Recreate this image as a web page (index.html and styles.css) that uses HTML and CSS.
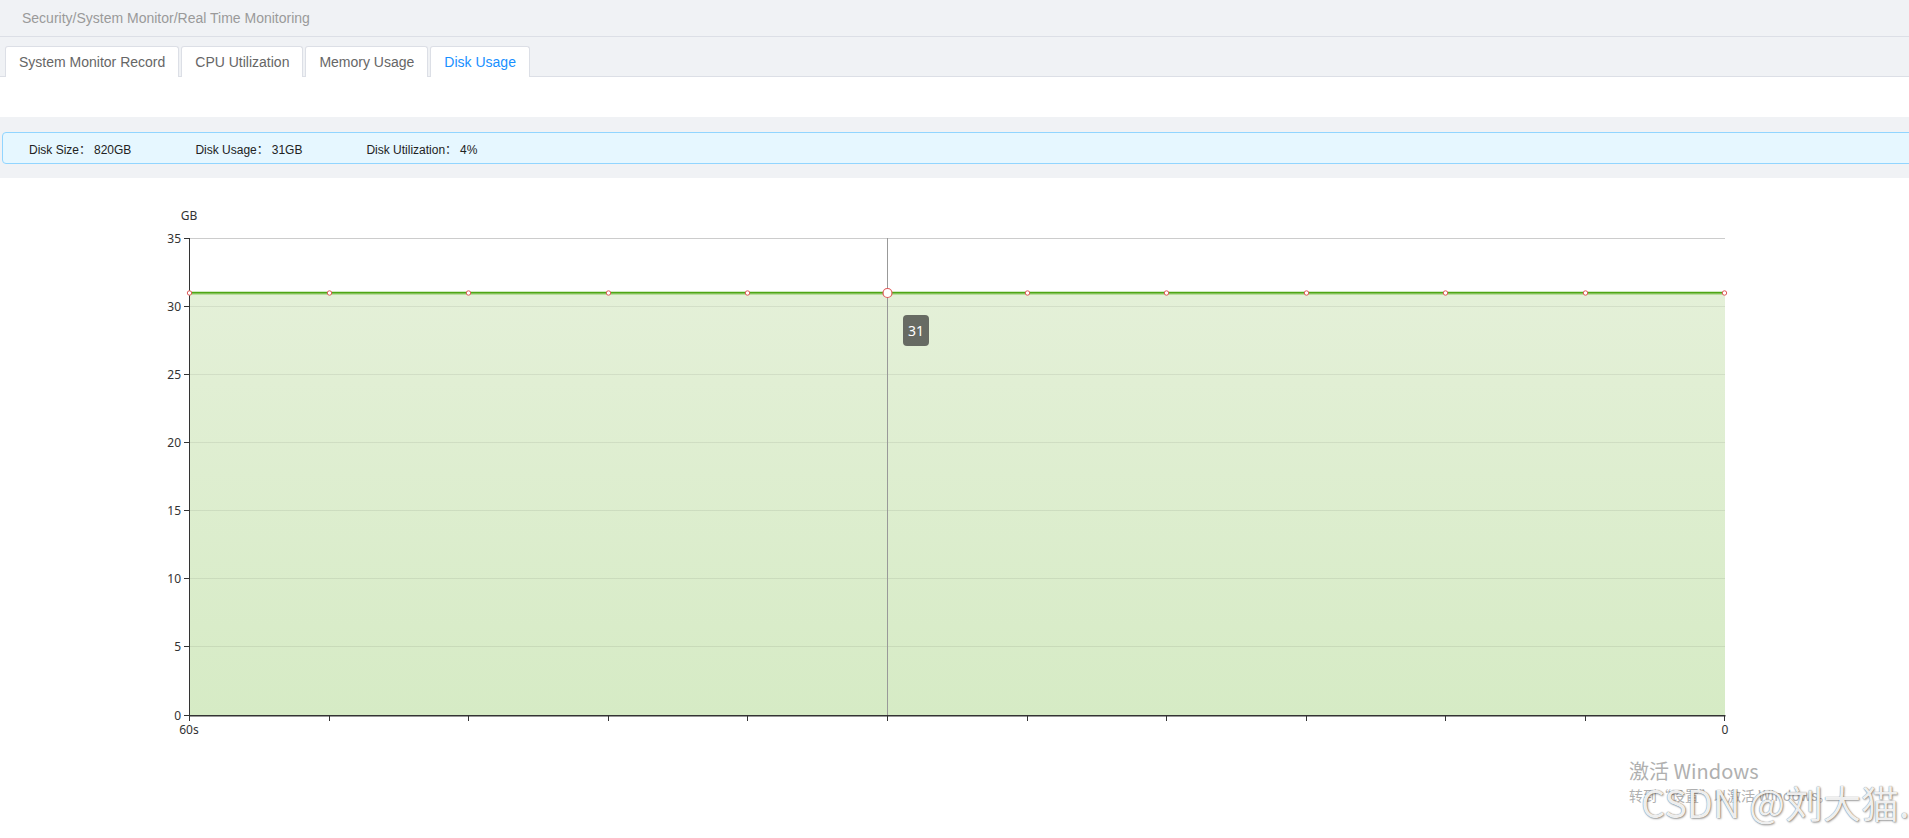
FILE: index.html
```html
<!DOCTYPE html>
<html>
<head>
<meta charset="utf-8">
<link rel="stylesheet" href="styles.css">
</head>
<body>
<div class="page">
  <div class="breadcrumb"><span>Security/System Monitor/Real Time Monitoring</span></div>
  <div class="tabs">
    <div class="tab">System Monitor Record</div>
    <div class="tab">CPU Utilization</div>
    <div class="tab">Memory Usage</div>
    <div class="tab active">Disk Usage</div>
  </div>
  <div class="spacer"></div>
  <div class="summary">
    <div class="info">
      <span class="item"><span class="label">Disk Size<span class="colon">：</span></span>820GB</span>
      <span class="item"><span class="label">Disk Usage<span class="colon">：</span></span>31GB</span>
      <span class="item"><span class="label">Disk Utilization<span class="colon">：</span></span>4%</span>
    </div>
  </div>
  <div class="chart">
    <svg class="plot" width="1909" height="660" viewBox="0 178 1909 660" xmlns="http://www.w3.org/2000/svg">
      <defs>
        <linearGradient id="area" x1="0" y1="0" x2="0" y2="1">
          <stop offset="0" stop-color="#e4f0d8"/>
          <stop offset="1" stop-color="#d6ebc5"/>
        </linearGradient>
      </defs>
      <!-- top grid line -->
      <line x1="189" y1="238.5" x2="1725" y2="238.5" stroke="#cccccc" stroke-width="1"/>
      <!-- area -->
      <rect x="189" y="293" width="1536" height="422.5" fill="url(#area)"/>
      <!-- grid lines inside area -->
      <g stroke="#000" stroke-opacity="0.07" stroke-width="1">
        <line x1="189" y1="306.5" x2="1725" y2="306.5"/>
        <line x1="189" y1="374.5" x2="1725" y2="374.5"/>
        <line x1="189" y1="442.5" x2="1725" y2="442.5"/>
        <line x1="189" y1="510.5" x2="1725" y2="510.5"/>
        <line x1="189" y1="578.5" x2="1725" y2="578.5"/>
        <line x1="189" y1="646.5" x2="1725" y2="646.5"/>
      </g>
      <!-- crosshair -->
      <line x1="887.5" y1="238" x2="887.5" y2="715" stroke="#999999" stroke-width="1"/>
      <!-- axes -->
      <line x1="189.5" y1="238" x2="189.5" y2="716" stroke="#333333" stroke-width="1"/>
      <line x1="189" y1="715.7" x2="1725.5" y2="715.7" stroke="#333333" stroke-width="1.4"/>
      <g stroke="#333333" stroke-width="1">
        <line x1="184" y1="238.5" x2="189" y2="238.5"/>
        <line x1="184" y1="306.5" x2="189" y2="306.5"/>
        <line x1="184" y1="374.5" x2="189" y2="374.5"/>
        <line x1="184" y1="442.5" x2="189" y2="442.5"/>
        <line x1="184" y1="510.5" x2="189" y2="510.5"/>
        <line x1="184" y1="578.5" x2="189" y2="578.5"/>
        <line x1="184" y1="646.5" x2="189" y2="646.5"/>
        <line x1="184" y1="715.5" x2="189" y2="715.5"/>
        <line x1="189.5" y1="716" x2="189.5" y2="721"/>
        <line x1="329.5" y1="716" x2="329.5" y2="721"/>
        <line x1="468.5" y1="716" x2="468.5" y2="721"/>
        <line x1="608.5" y1="716" x2="608.5" y2="721"/>
        <line x1="747.5" y1="716" x2="747.5" y2="721"/>
        <line x1="887.5" y1="716" x2="887.5" y2="721"/>
        <line x1="1027.5" y1="716" x2="1027.5" y2="721"/>
        <line x1="1166.5" y1="716" x2="1166.5" y2="721"/>
        <line x1="1306.5" y1="716" x2="1306.5" y2="721"/>
        <line x1="1445.5" y1="716" x2="1445.5" y2="721"/>
        <line x1="1585.5" y1="716" x2="1585.5" y2="721"/>
        <line x1="1724.5" y1="716" x2="1724.5" y2="721"/>
      </g>
      <!-- data line -->
      <line x1="189" y1="294" x2="1725" y2="294" stroke="#8fc964" stroke-width="1"/>
      <line x1="189" y1="292.6" x2="1725" y2="292.6" stroke="#4ea615" stroke-width="1.6"/>
      <g fill="#ffffff" stroke="#e05a5a" stroke-width="1">
        <circle cx="189.5" cy="293" r="2.2"/>
        <circle cx="329.5" cy="293" r="2.2"/>
        <circle cx="468.5" cy="293" r="2.2"/>
        <circle cx="608.5" cy="293" r="2.2"/>
        <circle cx="747.5" cy="293" r="2.2"/>
        <circle cx="1027.5" cy="293" r="2.2"/>
        <circle cx="1166.5" cy="293" r="2.2"/>
        <circle cx="1306.5" cy="293" r="2.2"/>
        <circle cx="1445.5" cy="293" r="2.2"/>
        <circle cx="1585.5" cy="293" r="2.2"/>
        <circle cx="1724.5" cy="293" r="2.2"/>
        <circle cx="887.5" cy="293" r="4.5" stroke-width="1.2"/>
      </g>
      <!-- labels -->
      <g class="lbl">
        <text x="189" y="220" text-anchor="middle">GB</text>
        <text x="181" y="242.5" text-anchor="end">35</text>
        <text x="181" y="310.5" text-anchor="end">30</text>
        <text x="181" y="378.5" text-anchor="end">25</text>
        <text x="181" y="446.5" text-anchor="end">20</text>
        <text x="181" y="514.5" text-anchor="end">15</text>
        <text x="181" y="582.5" text-anchor="end">10</text>
        <text x="181" y="650.5" text-anchor="end">5</text>
        <text x="181" y="719.5" text-anchor="end">0</text>
        <text x="189" y="734" text-anchor="middle">60s</text>
        <text x="1725" y="734" text-anchor="middle">0</text>
      </g>
    </svg>
    <div class="tooltip">31</div>
    <div class="activation">
      <div class="act-title">激活 Windows</div>
      <div class="act-sub">转到“设置”以激活 Windows。</div>
    </div>
    <div class="csdn">CSDN @刘大猫.</div>
  </div>
</div>
</body>
</html>
```
FILE: styles.css
```css
html, body {
  margin: 0;
  padding: 0;
}
body {
  width: 1909px;
  height: 838px;
  overflow: hidden;
  background: #ffffff;
  font-family: "Liberation Sans", Arial, "Noto Sans CJK SC", sans-serif;
}
.page {
  width: 1909px;
  overflow: hidden;
}
.breadcrumb {
  height: 36px;
  background: #f0f2f5;
  border-bottom: 1px solid #dcdfe6;
  display: flex;
  align-items: center;
  padding-left: 22px;
  font-size: 14px;
  color: #9a9a9a;
}
.tabs {
  height: 39px;
  background: #f0f2f5;
  border-bottom: 1px solid #dcdfe6;
  display: flex;
  align-items: flex-end;
  gap: 2px;
  padding-left: 5px;
}
.tab {
  box-sizing: border-box;
  height: 31px;
  margin-bottom: -1px;
  padding: 0 13px;
  background: #ffffff;
  border: 1px solid #dcdfe6;
  border-bottom: none;
  border-radius: 3px 3px 0 0;
  font-size: 14px;
  line-height: 30px;
  color: #666666;
}
.tab.active {
  color: #1890ff;
}
.spacer {
  height: 40px;
  background: #ffffff;
}
.summary {
  height: 61px;
  box-sizing: border-box;
  padding-top: 15px;
  background: #f0f2f5;
}
.info {
  box-sizing: border-box;
  height: 32px;
  margin-left: 2px;
  margin-right: -20px;
  padding-left: 26px;
  display: flex;
  align-items: center;
  background: #e6f7ff;
  border: 1px solid #91d5ff;
  border-radius: 4px;
  font-size: 12px;
  color: #222222;
}
.item {
  margin-right: 64px;
  white-space: nowrap;
}
.colon {
  font-family: "Noto Sans CJK SC", sans-serif;
  display: inline-block;
  width: 15px;
}
.chart {
  position: relative;
  height: 660px;
}
.plot {
  display: block;
}
.lbl text {
  font-family: "Noto Sans", "Open Sans", sans-serif;
  font-size: 12px;
  fill: #333333;
}
.tooltip {
  position: absolute;
  left: 903px;
  top: 137px;
  width: 26px;
  height: 31px;
  border-radius: 4px;
  background: rgba(50, 50, 50, 0.7);
  color: #ffffff;
  font-family: "Noto Sans", "Open Sans", sans-serif;
  font-size: 14px;
  line-height: 31px;
  text-align: center;
}
.activation {
  position: absolute;
  left: 1629px;
  top: 580px;
  color: #b0b0b0;
  font-family: "Noto Sans CJK SC", sans-serif;
}
.act-title {
  font-size: 20px;
  line-height: 26px;
}
.act-sub {
  font-size: 14px;
  line-height: 20px;
  margin-top: 1px;
}
.csdn {
  position: absolute;
  left: 1641px;
  top: 600px;
  font-family: "Noto Sans CJK SC", sans-serif;
  font-size: 38px;
  line-height: 48px;
  color: rgba(255, 255, 255, 0.92);
  white-space: nowrap;
  text-shadow: 0 0 1px rgba(0, 0, 0, 0.6), 1px 1px 2px rgba(0, 0, 0, 0.35);
}
```
